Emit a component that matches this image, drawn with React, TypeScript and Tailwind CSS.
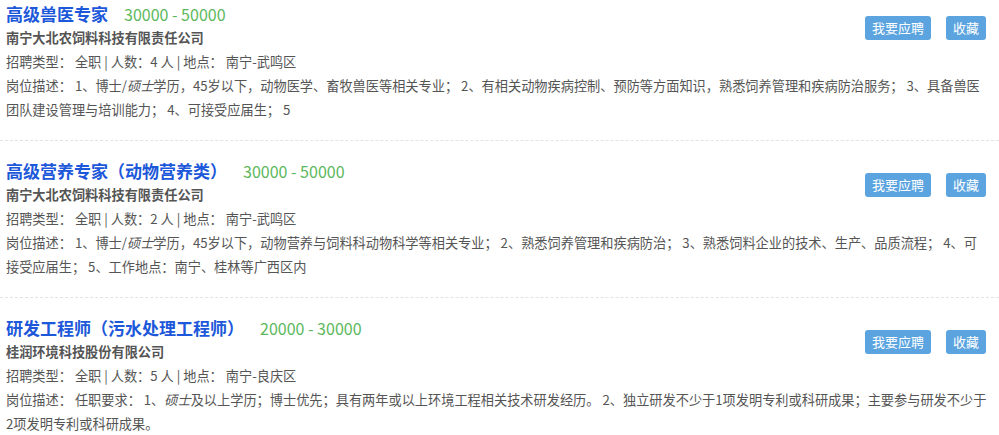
import React from "react";

type Job = {
  title: string;
  salary: string;
  company: string;
  count: number;
  place: string;
  desc: React.ReactNode;
};

const jobs: Job[] = [
  {
    title: "高级兽医专家",
    salary: "30000 - 50000",
    company: "南宁大北农饲料科技有限责任公司",
    count: 4,
    place: "南宁-武鸣区",
    desc: (
      <>
        1、博士/<em>硕士</em>学历，45岁以下，动物医学、畜牧兽医等相关专业； 2、有相关动物疾病控制、预防等方面知识，熟悉饲养管理和疾病防治服务； 3、具备兽医团队建设管理与培训能力； 4、可接受应届生； 5
      </>
    ),
  },
  {
    title: "高级营养专家（动物营养类）",
    salary: "30000 - 50000",
    company: "南宁大北农饲料科技有限责任公司",
    count: 2,
    place: "南宁-武鸣区",
    desc: (
      <>
        1、博士/<em>硕士</em>学历，45岁以下，动物营养与饲料科动物科学等相关专业； 2、熟悉饲养管理和疾病防治； 3、熟悉饲料企业的技术、生产、品质流程； 4、可接受应届生； 5、工作地点：南宁、桂林等广西区内
      </>
    ),
  },
  {
    title: "研发工程师（污水处理工程师）",
    salary: "20000 - 30000",
    company: "桂润环境科技股份有限公司",
    count: 5,
    place: "南宁-良庆区",
    desc: (
      <>
        任职要求： 1、<em>硕士</em>及以上学历；博士优先；具有两年或以上环境工程相关技术研发经历。 2、独立研发不少于1项发明专利或科研成果；主要参与研发不少于2项发明专利或科研成果。
      </>
    ),
  },
];

export default function App() {
  return (
    <div
      className="w-[999px] bg-white text-[13.2px] leading-6 text-[#555]"
      style={{ fontFamily: '"Noto Sans CJK SC", sans-serif' }}
    >
      {jobs.map((job, i) => (
        <div
          key={i}
          className={`pl-[6px] pr-[12px] pb-[18px] ${i === 0 ? "pt-[2px]" : "pt-[18px]"} ${
            i < jobs.length - 1 ? "border-b border-dashed border-[#e3e3e3]" : ""
          }`}
        >
          {/* actions */}
          <div className="float-right mr-[1px] mt-[14px] flex gap-[15px]">
            <button className="h-6 rounded-[3px] bg-[#5ba4e0] px-[7px] text-[13px] leading-6 text-white">
              我要应聘
            </button>
            <button className="h-6 rounded-[3px] bg-[#5ba4e0] px-[7px] text-[13px] leading-6 text-white">
              收藏
            </button>
          </div>

          <div className="flex items-center">
            <span className="text-[17px] font-bold leading-6 text-[#1c58d9]">{job.title}</span>
            <span className="ml-4 text-[16px] leading-6 text-[#5cb85c]">{job.salary}</span>
          </div>
          <div className="font-bold">{job.company}</div>
          <div>
            招聘类型： 全职 | 人数：{job.count} 人 | 地点： {job.place}
          </div>
          <div>岗位描述： {job.desc}</div>
        </div>
      ))}
    </div>
  );
}
